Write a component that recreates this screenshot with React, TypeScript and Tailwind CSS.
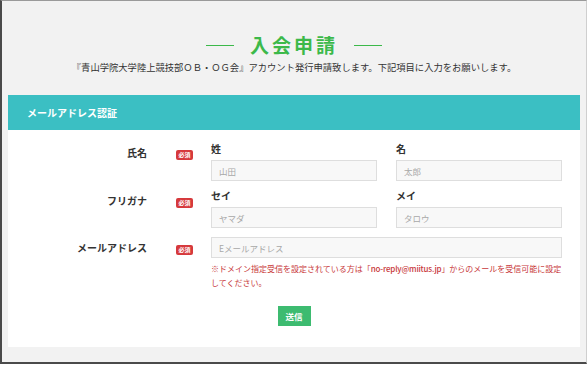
import type { ReactNode } from 'react'

const font = { fontFamily: '"Noto Sans CJK JP", "Noto Sans", sans-serif' }

function Badge() {
  return (
    <span className="flex h-[10px] w-[17px] items-center justify-center rounded-[2px] bg-[#d6393c] text-[6px] font-bold leading-none text-white">
      必須
    </span>
  )
}

function Field({ label, placeholder }: { label?: string; placeholder: string }) {
  return (
    <div className="flex flex-col">
      {label && <div className="h-[12px] text-[10px] font-bold leading-[12px] text-[#333]">{label}</div>}
      <input
        readOnly
        placeholder={placeholder}
        className={`${label ? 'mt-[5px]' : ''} h-[21px] w-full border border-[#dedede] bg-[#f8f8f8] px-[7px] text-[8.5px] text-[#333] outline-none placeholder:text-[#a8a8a8]`}
      />
    </div>
  )
}

function Row({ label, top, badgeTop, children }: { label: string; top: string; badgeTop: string; children: ReactNode }) {
  return (
    <div className="flex">
      <div className={`w-[139px] shrink-0 text-right text-[10px] font-bold leading-[12px] text-[#333] ${top}`}>{label}</div>
      <div className={`ml-[29px] shrink-0 ${badgeTop}`}>
        <Badge />
      </div>
      <div className="ml-[18px] w-[351px]">{children}</div>
    </div>
  )
}

export default function App() {
  return (
    <div className="h-[365px] w-[588px] bg-white" style={font}>
      <div className="flex h-[364px] w-[587px] flex-col border-t border-r border-b-2 border-l-2 border-t-[#9a9a9a] border-r-[#cfcfcf] border-b-[#4a4a4a] border-l-[#4a4a4a] bg-[#f2f2f2]">
        <div className="flex items-center justify-center gap-[16px] pt-[34px]">
          <span className="h-[1px] w-[28px] bg-[#3cb94a]" />
          <h1 className="text-[19px] font-bold leading-[20px] tracking-[3px] text-[#3cb94a]">入会申請</h1>
          <span className="h-[1px] w-[28px] bg-[#3cb94a]" />
        </div>
        <p className="mt-[6px] text-center text-[9.3px] leading-[12px] text-[#333]">
          『青山学院大学陸上競技部ＯＢ・ＯＧ会』アカウント発行申請致します。下記項目に入力をお願いします。
        </p>

        <div className="mt-[22px] ml-[6px] w-[572px] bg-white">
          <div className="flex h-[35px] items-center bg-[#3bbfc3] pl-[19px] text-[10px] font-bold text-white">
            メールアドレス認証
          </div>
          <div className="flex flex-col pt-[13px] pb-[21px]">
            <Row label="氏名" top="pt-[4px]" badgeTop="pt-[7px]">
              <div className="grid grid-cols-2 gap-[19px]">
                <Field label="姓" placeholder="山田" />
                <Field label="名" placeholder="太郎" />
              </div>
            </Row>
            <div className="mt-[9px]">
              <Row label="フリガナ" top="pt-[5px]" badgeTop="pt-[8px]">
                <div className="grid grid-cols-2 gap-[19px]">
                  <Field label="セイ" placeholder="ヤマダ" />
                  <Field label="メイ" placeholder="タロウ" />
                </div>
              </Row>
            </div>
            <div className="mt-[9px]">
              <Row label="メールアドレス" top="pt-[5px]" badgeTop="pt-[8px]">
                <Field placeholder="Eメールアドレス" />
                <p className="mt-[4px] whitespace-nowrap text-[8px] leading-[14px] text-[#c8383a]">
                  ※ドメイン指定受信を設定されている方は「<span className="font-medium tracking-[-0.2px]">no-reply@miitus.jp</span>」からのメールを受信可能に設定
                  <br />
                  してください。
                </p>
              </Row>
            </div>
            <div className="mt-[16px] flex justify-center">
              <button
                type="button"
                className="h-[20px] w-[33px] bg-[#3dbb70] text-[8.5px] font-bold leading-none text-white"
              >
                送信
              </button>
            </div>
          </div>
        </div>
      </div>
    </div>
  )
}
